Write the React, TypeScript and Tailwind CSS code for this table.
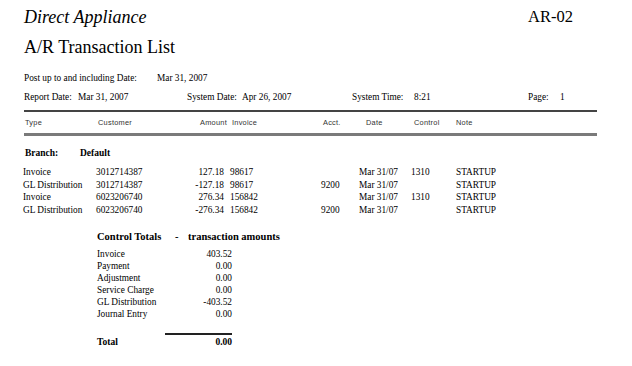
import React from "react";

type Txn = {
  type: string;
  customer: string;
  amount: string;
  invoice: string;
  acct: string;
  date: string;
  control: string;
  note: string;
};

const txns: Txn[] = [
  { type: "Invoice", customer: "3012714387", amount: "127.18", invoice: "98617", acct: "", date: "Mar 31/07", control: "1310", note: "STARTUP" },
  { type: "GL Distribution", customer: "3012714387", amount: "-127.18", invoice: "98617", acct: "9200", date: "Mar 31/07", control: "", note: "STARTUP" },
  { type: "Invoice", customer: "6023206740", amount: "276.34", invoice: "156842", acct: "", date: "Mar 31/07", control: "1310", note: "STARTUP" },
  { type: "GL Distribution", customer: "6023206740", amount: "-276.34", invoice: "156842", acct: "9200", date: "Mar 31/07", control: "", note: "STARTUP" },
];

const totals = [
  { label: "Invoice", value: "403.52" },
  { label: "Payment", value: "0.00" },
  { label: "Adjustment", value: "0.00" },
  { label: "Service Charge", value: "0.00" },
  { label: "GL Distribution", value: "-403.52" },
  { label: "Journal Entry", value: "0.00" },
];

export default function App() {
  return (
    <div className="w-[632px] h-[366px] bg-white text-black font-['Liberation_Serif',serif] overflow-hidden">
      {/* title block */}
      <div className="flex mt-[7px] leading-[20px]">
        <div className="pl-[24px] w-[528px] text-[18px] italic">Direct Appliance</div>
        <div className="text-[16.5px]">AR-02</div>
      </div>
      <div className="pl-[24px] mt-[10px] text-[18px] leading-[20px]">A/R Transaction List</div>

      <div className="text-[9.3px] leading-[12px] whitespace-nowrap">
        <div className="flex pl-[24px] mt-[15px]">
          <span className="w-[133px]">Post up to and including Date:</span>
          <span>Mar 31, 2007</span>
        </div>
        <div className="flex pl-[24px] mt-[7px]">
          <span className="w-[54px]">Report Date:</span>
          <span className="w-[109px]">Mar 31, 2007</span>
          <span className="w-[55px]">System Date:</span>
          <span className="w-[110px]">Apr 26, 2007</span>
          <span className="w-[62px]">System Time:</span>
          <span className="w-[114px]">8:21</span>
          <span className="w-[32px]">Page:</span>
          <span>1</span>
        </div>
      </div>

      {/* column heads */}
      <div className="ml-[24px] w-[573px] mt-[7px] h-[2px] bg-[#444]" />
      <div className="flex pl-[25px] mt-[5px] text-[7.4px] leading-[11px] tracking-[0.25px] text-[#333] font-['Liberation_Sans',sans-serif] whitespace-nowrap">
        <span className="w-[73px]">Type</span>
        <span className="w-[89px]">Customer</span>
        <span className="w-[40px] text-right">Amount</span>
        <span className="w-[91px] ml-[5px]">Invoice</span>
        <span className="w-[43px]">Acct.</span>
        <span className="w-[48px]">Date</span>
        <span className="w-[42px]">Control</span>
        <span>Note</span>
      </div>
      <div className="ml-[24px] w-[573px] mt-[5px] h-[3px] bg-[#7a7a7a]" />

      {/* branch */}
      <div className="flex pl-[25px] mt-[11px] text-[9.5px] leading-[12px] font-bold">
        <span className="w-[55px]">Branch:</span>
        <span>Default</span>
      </div>

      <div className="mt-[7px] text-[9.3px] leading-[12.5px] whitespace-nowrap">
        {txns.map((t, i) => (
          <div key={i} className="flex pl-[23px]">
            <span className="w-[73px]">{t.type}</span>
            <span className="w-[90px]">{t.customer}</span>
            <span className="w-[38px] text-right">{t.amount}</span>
            <span className="w-[91px] ml-[6px]">{t.invoice}</span>
            <span className="w-[38px]">{t.acct}</span>
            <span className="w-[52px]">{t.date}</span>
            <span className="w-[45px]">{t.control}</span>
            <span>{t.note}</span>
          </div>
        ))}
      </div>

      {/* control totals */}
      <div className="flex ml-[97px] mt-[15px] text-[10.5px] leading-[12px] font-bold whitespace-nowrap">
        <span className="w-[78px]">Control Totals</span>
        <span className="w-[13px]">-</span>
        <span>transaction amounts</span>
      </div>
      <div className="ml-[97px] w-[135px] mt-[5px] text-[9.3px] leading-[12px]">
        {totals.map((r) => (
          <div key={r.label} className="flex justify-between">
            <span>{r.label}</span>
            <span>{r.value}</span>
          </div>
        ))}
      </div>
      <div className="ml-[165px] w-[67px] mt-[13px] h-[2px] bg-[#222]" />
      <div className="flex justify-between ml-[97px] w-[135px] mt-[1px] text-[9.5px] leading-[12px] font-bold">
        <span>Total</span>
        <span>0.00</span>
      </div>
    </div>
  );
}
